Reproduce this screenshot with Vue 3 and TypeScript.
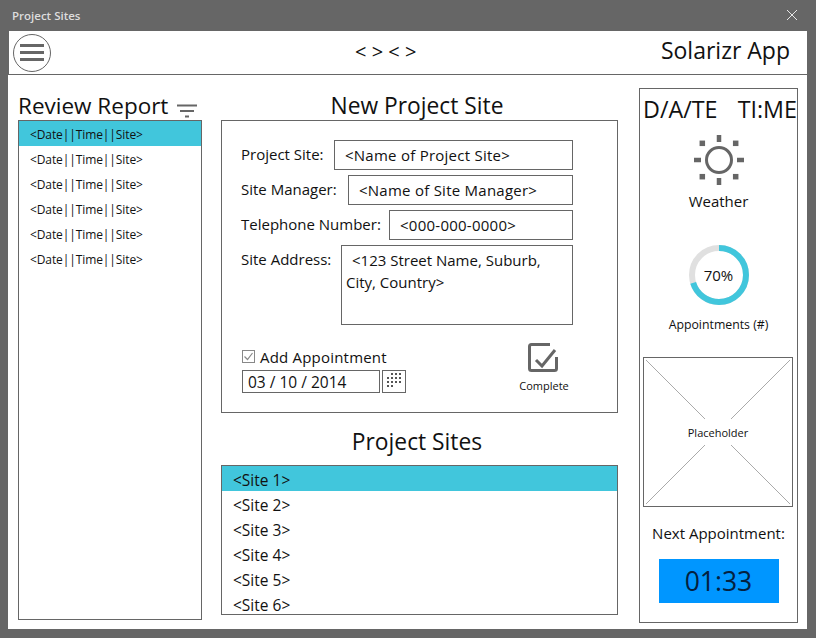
<script setup lang="ts">
const reports: string[] = Array(6).fill('<Date||Time||Site>');
const sites: string[] = ['<Site 1>', '<Site 2>', '<Site 3>', '<Site 4>', '<Site 5>', '<Site 6>'];

const fields = [
  { label: 'Project Site:', value: '<Name of Project Site>', width: 93 },
  { label: 'Site Manager:', value: '<Name of Site Manager>', width: 107 },
  { label: 'Telephone Number:', value: '<000-000-0000>', width: 148 },
];

// 70% of the ring, r = 27
const circumference = 2 * Math.PI * 27;
const ringDash = `${circumference * 0.7} ${circumference}`;

const sunRays = [0, 45, 90, 135, 180, 225, 270, 315];

// calendar glyph: columns used in each of the four rows
const calendarRows: number[][] = [
  [1, 2, 3],
  [0, 1, 2, 3],
  [0, 1, 2, 3],
  [0, 1],
];
</script>

<template>
  <div class="window">
    <div class="titlebar">
      <span class="title">Project Sites</span>
      <svg class="close" width="12" height="12" viewBox="0 0 12 12">
        <path d="M1 1L11 11M11 1L1 11" stroke="#e6e6e6" stroke-width="1" fill="none" />
      </svg>
    </div>

    <div class="appbar">
      <div class="appbar-left">
        <div class="menu-btn">
          <span></span><span></span><span></span>
        </div>
      </div>
      <div class="nav-arrows">&lt; &gt; &lt; &gt;</div>
      <div class="app-name">Solarizr App</div>
    </div>

    <div class="content">
      <section class="col-left">
        <div class="review-head">
          <h2>Review Report</h2>
          <svg width="20" height="14" viewBox="0 0 20 14">
            <path d="M0 1.5H20M3 7H17M8 12.5H12" stroke="#666" stroke-width="2" fill="none" />
          </svg>
        </div>
        <ul class="list report-list">
          <li v-for="(r, i) in reports" :key="i" :class="{ selected: i === 0 }">{{ r }}</li>
        </ul>
      </section>

      <section class="col-center">
        <h2 class="center-title">New Project Site</h2>
        <div class="form-box">
          <div v-for="f in fields" :key="f.label" class="field-row">
            <label :style="{ width: f.width + 'px' }">{{ f.label }}</label>
            <div class="input">{{ f.value }}</div>
          </div>
          <div class="field-row address-row">
            <label>Site Address:</label>
            <div class="input textarea">
              <div class="first-line">&lt;123 Street Name, Suburb,</div>
              <div>City, Country&gt;</div>
            </div>
          </div>
          <div class="appointment">
            <div class="appt-left">
              <div class="check-row">
                <svg width="14" height="14" viewBox="0 0 14 14">
                  <rect x="0.5" y="0.5" width="12" height="12" fill="#fff" stroke="#888" />
                  <path d="M2.5 6.5L5.5 9.5L10.5 3" stroke="#888" stroke-width="1.2" fill="none" />
                </svg>
                <span>Add Appointment</span>
              </div>
              <div class="date-row">
                <div class="date-input">03 / 10 / 2014</div>
                <div class="date-btn">
                  <svg width="16" height="16" viewBox="0 0 16 16">
                    <g fill="#555">
                      <template v-for="(cols, row) in calendarRows" :key="row">
                        <rect
                          v-for="c in cols"
                          :key="c"
                          :x="1 + c * 4"
                          :y="row * 4"
                          width="2"
                          height="2"
                        />
                      </template>
                    </g>
                  </svg>
                </div>
              </div>
            </div>
            <div class="complete">
              <svg width="33" height="32" viewBox="0 0 33 32">
                <path d="M22 3.5H3.5C2.4 3.5 1.5 4.4 1.5 5.5V27.5C1.5 28.6 2.4 29.5 3.5 29.5H26.5C27.6 29.5 28.5 28.6 28.5 27.5V16" stroke="#666" stroke-width="3" fill="none" />
                <path d="M8 19L14 25L27 9" stroke="#666" stroke-width="3" fill="none" />
              </svg>
              <span>Complete</span>
            </div>
          </div>
        </div>

        <h2 class="sites-title">Project Sites</h2>
        <ul class="list sites-list">
          <li v-for="(s, i) in sites" :key="s" :class="{ selected: i === 0 }">{{ s }}</li>
        </ul>
      </section>

      <aside class="col-right">
        <div class="datetime"><span>D/A/TE</span><span>TI:ME</span></div>
        <svg class="sun" width="52" height="52" viewBox="0 0 52 52">
          <circle cx="26" cy="26" r="12.5" fill="none" stroke="#666" stroke-width="3" />
          <g fill="#666">
            <template v-for="a in sunRays" :key="a">
              <rect
                v-if="a % 90 === 0"
                x="23.75"
                y="1"
                width="4.5"
                height="7"
                :transform="`rotate(${a} 26 26)`"
              />
              <rect
                v-else
                x="23.25"
                y="-0.35"
                width="5.5"
                height="5.5"
                :transform="`rotate(${a} 26 26) rotate(45 26 2.4)`"
              />
            </template>
          </g>
        </svg>
        <div class="weather">Weather</div>

        <div class="ring">
          <svg width="60" height="60" viewBox="0 0 60 60">
            <circle cx="30" cy="30" r="27" fill="none" stroke="#e0e0e0" stroke-width="6" />
            <circle
              cx="30"
              cy="30"
              r="27"
              fill="none"
              stroke="#41c6dc"
              stroke-width="6"
              :stroke-dasharray="ringDash"
              transform="rotate(-90 30 30)"
            />
          </svg>
          <span class="ring-label">70%</span>
        </div>
        <div class="appts">Appointments (#)</div>

        <div class="placeholder">
          <svg class="ph-lines" width="148" height="148" viewBox="0 0 148 148">
            <path
              d="M2 2L61 61M146 2L87 61M2 146L61 87M146 146L87 87"
              stroke="#aaa"
              stroke-width="1"
              fill="none"
            />
          </svg>
          <span>Placeholder</span>
        </div>

        <div class="next">Next Appointment:</div>
        <div class="timer">01:33</div>
      </aside>
    </div>
  </div>
</template>

<style>
html,
body {
  margin: 0;
  background: #666;
}
</style>

<style scoped>
.window {
  width: 816px;
  height: 638px;
  box-sizing: border-box;
  background: #666;
  padding-bottom: 9px;
  display: flex;
  flex-direction: column;
  font-family: "Open Sans", "Liberation Sans", sans-serif;
  color: #111;
  overflow: hidden;
}

.titlebar {
  height: 31px;
  box-sizing: border-box;
  flex: none;
  display: flex;
  align-items: center;
  justify-content: space-between;
  padding: 0 18px 1px 12px;
}
.title {
  font-size: 11.5px;
  font-weight: 600;
  color: #ddd;
}
.close {
  display: block;
}

.appbar {
  height: 44px;
  box-sizing: border-box;
  flex: none;
  margin: 0 9px;
  background: #fff;
  border-bottom: 1px solid #666;
  display: grid;
  grid-template-columns: 346px auto 1fr;
  align-items: center;
}
.appbar-left {
  padding-left: 4px;
}
.menu-btn {
  width: 38px;
  height: 38px;
  box-sizing: border-box;
  border: 1px solid #666;
  border-radius: 50%;
  display: flex;
  flex-direction: column;
  align-items: center;
  justify-content: center;
  gap: 4px;
}
.menu-btn span {
  display: block;
  width: 24px;
  height: 3px;
  background: #666;
}
.nav-arrows {
  font-size: 20px;
  padding-bottom: 2px;
}
.app-name {
  text-align: right;
  font-size: 23px;
  padding: 0 17px 5px 0;
}

.content {
  flex: 1;
  min-height: 0;
  margin-left: 8px;
  margin-right: 9px;
  background: #fff;
  display: flex;
  padding: 14px 9px 6px 10px;
}

h2 {
  margin: 0;
  font-weight: 400;
  font-size: 22.5px;
  height: 31px;
  line-height: 33px;
}

ul {
  margin: 0;
  padding: 0;
  list-style: none;
}
.list {
  border: 1px solid #666;
  overflow: hidden;
  box-sizing: border-box;
}
.list li {
  height: 25px;
  white-space: nowrap;
}
.list li.selected {
  background: #41c6dc;
}

.col-left {
  width: 184px;
  flex: none;
  display: flex;
  flex-direction: column;
}
.review-head {
  height: 31px;
  display: flex;
  align-items: center;
  gap: 9px;
}
.review-head svg {
  margin-top: 12px;
}
.report-list {
  height: 500px;
  font-size: 12px;
}
.report-list li {
  padding-left: 11px;
  line-height: 27px;
  letter-spacing: -0.1px;
}

.col-center {
  width: 397px;
  flex: none;
  margin-left: 19px;
  display: flex;
  flex-direction: column;
}
.center-title,
.sites-title {
  text-align: center;
  font-size: 22.8px;
  padding-right: 5px;
}
.form-box {
  height: 293px;
  box-sizing: border-box;
  border: 1px solid #666;
  padding: 19px 44px 0 19px;
  display: flex;
  flex-direction: column;
  gap: 5px;
}
.field-row {
  display: flex;
  font-size: 15px;
  height: 30px;
  line-height: 29px;
}
.field-row label {
  flex: none;
  white-space: nowrap;
}
.input {
  flex: 1;
  border: 1px solid #666;
  box-sizing: border-box;
  padding-left: 10px;
  white-space: nowrap;
  letter-spacing: 0.25px;
}
.address-row {
  height: 80px;
}
.address-row label {
  width: 100px;
}
.textarea {
  padding-left: 4px;
  line-height: 22px;
  padding-top: 3px;
  letter-spacing: 0;
}
.first-line {
  padding-left: 6px;
}

.appointment {
  display: flex;
  justify-content: space-between;
  margin-top: 17px;
  margin-right: -1px;
}
.appt-left {
  padding-left: 1px;
}
.check-row {
  display: flex;
  align-items: center;
  gap: 4px;
  font-size: 15px;
  letter-spacing: 0.2px;
  height: 20px;
}
.date-row {
  display: flex;
  gap: 2px;
  margin-top: 3px;
}
.date-input {
  width: 138px;
  height: 23px;
  box-sizing: border-box;
  border: 1px solid #666;
  font-size: 15.5px;
  line-height: 23px;
  padding-left: 5px;
}
.date-btn {
  width: 24px;
  height: 23px;
  box-sizing: border-box;
  border: 1px solid #666;
  padding-top: 2px;
  display: flex;
  justify-content: center;
}
.complete {
  width: 60px;
  display: flex;
  flex-direction: column;
  align-items: center;
  font-size: 11px;
  margin-top: -6px;
}
.complete span {
  margin-top: 5px;
}

.sites-title {
  margin-top: 12px;
}
.sites-list {
  margin-top: 9px;
  height: 150px;
  font-size: 15.5px;
}
.sites-list li {
  padding-left: 11px;
  line-height: 28px;
}

.col-right {
  width: 159px;
  height: 535px;
  box-sizing: border-box;
  flex: none;
  margin-left: 21px;
  margin-top: -1px;
  border: 1px solid #666;
  display: flex;
  flex-direction: column;
  align-items: center;
}
.datetime {
  width: 100%;
  box-sizing: border-box;
  display: flex;
  justify-content: space-between;
  padding: 5px 0 0 3px;
  font-size: 23.3px;
  line-height: 31px;
  white-space: nowrap;
}
.sun {
  display: block;
  margin-top: 9px;
}
.weather {
  font-size: 15px;
  margin-top: 5px;
  line-height: 20px;
}
.ring {
  position: relative;
  width: 60px;
  height: 60px;
  margin-top: 34px;
}
.ring svg {
  display: block;
}
.ring-label {
  position: absolute;
  inset: 0;
  display: flex;
  align-items: center;
  justify-content: center;
  font-size: 15px;
}
.appts {
  font-size: 12.3px;
  margin-top: 10px;
  line-height: 20px;
}
.placeholder {
  position: relative;
  width: 150px;
  height: 150px;
  box-sizing: border-box;
  border: 1px solid #666;
  margin-top: 22px;
  align-self: flex-start;
  margin-left: 3px;
  display: flex;
  align-items: center;
  justify-content: center;
  font-size: 11px;
}
.ph-lines {
  position: absolute;
  inset: 0;
}
.placeholder span {
  position: relative;
}
.next {
  font-size: 15px;
  margin-top: 16px;
  line-height: 20px;
}
.timer {
  width: 120px;
  height: 44px;
  margin-top: 16px;
  background: #0096ff;
  color: #04213f;
  font-size: 26.5px;
  line-height: 44px;
  text-align: center;
}
</style>
